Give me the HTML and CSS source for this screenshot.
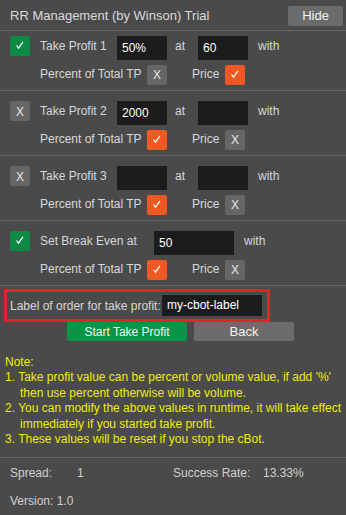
FILE: index.html
```html
<!DOCTYPE html>
<html>
<head>
<meta charset="utf-8">
<link rel="stylesheet" href="styles.css">
</head>
<body>
<div class="panel">
  <div class="header">
    <span class="title">RR Management (by Winson) Trial</span>
    <button class="btn btn-hide">Hide</button>
  </div>

  <div class="section first">
    <div class="row1">
      <span class="box on green"><svg viewBox="0 0 20 20"><polyline points="6.5,9.5 8.5,12.2 13,5.8"/></svg></span>
      <span class="lbl">Take Profit 1</span>
      <span class="input">50%</span>
      <span class="at">at</span>
      <span class="input">60</span>
      <span class="with">with</span>
    </div>
    <div class="row2">
      <span class="lbl2">Percent of Total TP</span>
      <span class="box off">X</span>
      <span class="price">Price</span>
      <span class="box on orange"><svg viewBox="0 0 20 20"><polyline points="6.5,9.5 8.5,12.2 13,5.8"/></svg></span>
    </div>
  </div>

  <div class="section">
    <div class="row1">
      <span class="box off">X</span>
      <span class="lbl">Take Profit 2</span>
      <span class="input">2000</span>
      <span class="at">at</span>
      <span class="input"></span>
      <span class="with">with</span>
    </div>
    <div class="row2">
      <span class="lbl2">Percent of Total TP</span>
      <span class="box on orange"><svg viewBox="0 0 20 20"><polyline points="6.5,9.5 8.5,12.2 13,5.8"/></svg></span>
      <span class="price">Price</span>
      <span class="box off">X</span>
    </div>
  </div>

  <div class="section">
    <div class="row1">
      <span class="box off">X</span>
      <span class="lbl">Take Profit 3</span>
      <span class="input"></span>
      <span class="at">at</span>
      <span class="input"></span>
      <span class="with">with</span>
    </div>
    <div class="row2">
      <span class="lbl2">Percent of Total TP</span>
      <span class="box on orange"><svg viewBox="0 0 20 20"><polyline points="6.5,9.5 8.5,12.2 13,5.8"/></svg></span>
      <span class="price">Price</span>
      <span class="box off">X</span>
    </div>
  </div>

  <div class="section">
    <div class="row1">
      <span class="box on green"><svg viewBox="0 0 20 20"><polyline points="6.5,9.5 8.5,12.2 13,5.8"/></svg></span>
      <span class="lbl lbl-be">Set Break Even at</span>
      <span class="input wide">50</span>
      <span class="with">with</span>
    </div>
    <div class="row2">
      <span class="lbl2">Percent of Total TP</span>
      <span class="box on orange"><svg viewBox="0 0 20 20"><polyline points="6.5,9.5 8.5,12.2 13,5.8"/></svg></span>
      <span class="price">Price</span>
      <span class="box off">X</span>
    </div>
  </div>

  <div class="label-box">
    <span class="label-text">Label of order for take profit:</span>
    <span class="input label-input">my-cbot-label</span>
  </div>

  <div class="actions">
    <button class="btn btn-start">Start Take Profit</button>
    <button class="btn btn-back">Back</button>
  </div>

  <div class="notes">
    <div>Note:</div>
    <div>1. Take profit value can be percent or volume value, if add '%'</div>
    <div class="indent">then use percent otherwise will be volume.</div>
    <div>2. You can modify the above values in runtime, it will take effect</div>
    <div class="indent">immediately if you started take profit.</div>
    <div>3. These values will be reset if you stop the cBot.</div>
  </div>

  <div class="footer">
    <div class="stats">
      <span class="k1">Spread:</span>
      <span class="v1">1</span>
      <span class="k2">Success Rate:</span>
      <span class="v2">13.33%</span>
    </div>
    <div class="version">Version: 1.0</div>
  </div>
</div>
</body>
</html>
```

FILE: styles.css
```css
html, body {
  margin: 0;
  padding: 0;
  background: #4a4a4a;
}
body {
  font-family: "Liberation Sans", Arial, sans-serif;
  font-size: 12px;
  color: #d8d8d8;
}
.panel {
  width: 346px;
  height: 515px;
  background: #4a4a4a;
}
.header {
  height: 30px;
  display: flex;
  align-items: center;
  justify-content: space-between;
  padding: 0 3px 0 10px;
  border-bottom: 1px solid #666666;
}
.title {
  font-size: 13px;
  color: #dadada;
}
.btn {
  border: none;
  border-radius: 2px;
  font-family: "Liberation Sans", Arial, sans-serif;
  color: #f4f4f4;
  padding: 0;
  height: 20px;
  cursor: pointer;
}
.btn-hide {
  width: 55px;
  background: #6b6b6b;
  font-size: 13px;
  margin-top: 1px;
}
.section {
  padding: 10px 0 5px 10px;
  border-bottom: 1px solid #666666;
}
.section.first {
  padding-top: 5px;
}
.row1 {
  display: flex;
  align-items: flex-start;
  height: 24px;
  line-height: 20px;
}
.row2 {
  display: flex;
  align-items: flex-start;
  height: 20px;
  line-height: 19px;
  margin-top: 5px;
  padding-left: 30px;
}
.box {
  width: 20px;
  height: 20px;
  border-radius: 2px;
  display: flex;
  align-items: center;
  justify-content: center;
  flex: none;
  font-size: 12px;
  color: #e6e6e6;
}
.box svg {
  width: 20px;
  height: 20px;
}
.box svg polyline {
  fill: none;
  stroke: #ffffff;
  stroke-width: 1.2;
}
.box.off {
  background: #666666;
  padding-top: 1px;
  box-sizing: border-box;
}
.green { background: #0b8a45; }
.orange { background: #ee5a22; }
.lbl {
  width: 77px;
  margin-left: 10px;
}
.lbl-be {
  width: 114px;
}
.input {
  width: 50px;
  height: 24px;
  background: #1c1c1c;
  color: #ffffff;
  line-height: 25px;
  padding-left: 5px;
  box-sizing: border-box;
  flex: none;
}
.input.wide {
  width: 80px;
}
.at {
  width: 31px;
  padding-left: 8px;
  box-sizing: border-box;
}
.with {
  padding-left: 10px;
}
.lbl2 {
  width: 107px;
}
.price {
  width: 58px;
  padding-left: 25px;
  box-sizing: border-box;
}
.label-box {
  margin: 3px 0 0 4px;
  width: 266px;
  height: 33px;
  box-sizing: border-box;
  border: 3px solid #e3222c;
  display: flex;
  align-items: center;
  padding: 0 5px 0 3px;
  justify-content: space-between;
}
.label-input {
  width: 100px;
  height: 21px;
  line-height: 21px;
  padding-left: 5px;
}
.actions {
  display: flex;
  gap: 7px;
  padding-left: 67px;
}
.btn-start {
  width: 120px;
  height: 19px;
  background: #0a9448;
  font-size: 12px;
}
.btn-back {
  width: 100px;
  height: 19px;
  background: #6b6b6b;
  font-size: 13px;
}
.notes {
  margin-top: 14px;
  padding-left: 5px;
  color: #eeee00;
  line-height: 15.4px;
  font-size: 12px;
}
.notes .indent {
  padding-left: 15px;
}
.footer {
  margin-top: 10px;
  border-top: 1px solid #666666;
  padding: 8px 0 0 10px;
  color: #d0d0d0;
}
.stats {
  display: flex;
  height: 14px;
  line-height: 14px;
}
.k1 { width: 67px; }
.v1 { width: 96px; }
.k2 { width: 90px; }
.version {
  margin-top: 14px;
  line-height: 14px;
}
```
